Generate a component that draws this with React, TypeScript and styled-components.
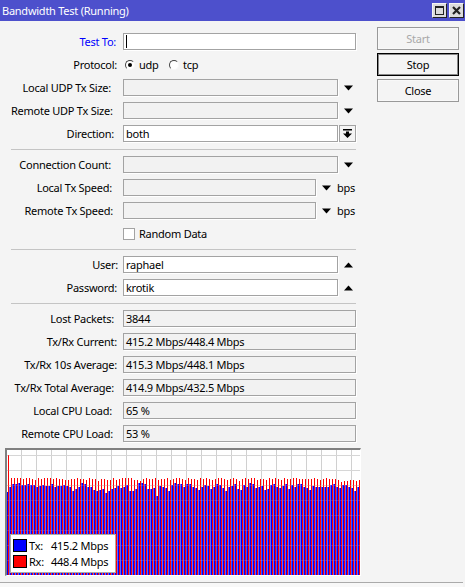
import React from 'react';
import styled, { createGlobalStyle } from 'styled-components';

const GlobalStyle = createGlobalStyle`
    html, body {
        margin: 0;
        padding: 0;
        background: #f4f4f4;
    }
    * {
        box-sizing: border-box;
    }
`;

const Window = styled.div`
    width: 465px;
    height: 587px;
    display: flex;
    flex-direction: column;
    overflow: hidden;
    background: #f4f4f4;
    color: #000;
    font-family: 'Noto Sans', sans-serif;
    font-size: 11px;
    letter-spacing: -0.25px;
`;

const TitleBar = styled.div`
    height: 21px;
    flex: none;
    display: flex;
    align-items: center;
    justify-content: space-between;
    padding: 0 1px 0 2px;
    background: #4d50cc;
    color: #fff;
`;

const TitleButtons = styled.div`
    display: flex;
    gap: 2px;
`;

const TitleButton = styled.div`
    width: 15px;
    height: 15px;
    display: flex;
    align-items: center;
    justify-content: center;
    background: #dcdcdc;
    border: 1px solid;
    border-color: #f4f4f4 #222 #222 #f4f4f4;
`;

const Content = styled.div`
    display: flex;
    align-items: flex-start;
    padding-top: 6px;
`;

const Form = styled.div`
    width: 377px;
    display: flex;
    flex-direction: column;
    gap: 6px;
    padding: 6px 21px 0 11px;
`;

const Row = styled.div`
    height: 17px;
    display: flex;
    align-items: center;
`;

const Label = styled.div<{ $gap: number; $color?: string }>`
    width: 112px;
    flex: none;
    text-align: right;
    white-space: nowrap;
    padding-right: ${(props) => props.$gap}px;
    color: ${(props) => props.$color || '#000'};
`;

const Field = styled.div<{ $editable?: boolean; $width?: number }>`
    height: 17px;
    flex: ${(props) => (props.$width ? 'none' : '1')};
    width: ${(props) => (props.$width ? `${props.$width}px` : 'auto')};
    display: flex;
    align-items: center;
    padding: 0 2px;
    white-space: nowrap;
    background: ${(props) => (props.$editable ? '#fff' : '#f2f2f2')};
    border: 1px solid #a3a3a3;
    box-shadow: 1px 1px 0 #fff;
`;

const Caret = styled.span`
    width: 1px;
    height: 13px;
    background: #000;
`;

const ArrowSlot = styled.div`
    width: 18px;
    height: 17px;
    flex: none;
    display: flex;
    align-items: center;
    justify-content: flex-end;
    padding-right: 3px;
`;

const DirectionButton = styled.div`
    width: 17px;
    height: 17px;
    flex: none;
    margin-left: 1px;
    display: flex;
    align-items: center;
    justify-content: center;
    border: 1px solid #a3a3a3;
    box-shadow: 1px 1px 0 #fff;
`;

const Unit = styled.span`
    margin-left: 3px;
`;

const RadioGroup = styled.div`
    display: flex;
    align-items: center;
    padding-left: 2px;
`;

const Radio = styled.span<{ $checked?: boolean }>`
    width: 10px;
    height: 10px;
    flex: none;
    display: flex;
    align-items: center;
    justify-content: center;
    border-radius: 50%;
    background: #fff;
    border: 1px solid;
    border-color: #444 #f8f8f8 #f8f8f8 #444;

    &::after {
        content: '';
        display: ${(props) => (props.$checked ? 'block' : 'none')};
        width: 4px;
        height: 4px;
        border-radius: 50%;
        background: #000;
    }
`;

const RadioText = styled.span<{ $width: number }>`
    width: ${(props) => props.$width}px;
    padding-left: 4px;
`;

const CheckRow = styled.div`
    height: 17px;
    display: flex;
    align-items: center;
    gap: 4px;
    padding-left: 112px;
`;

const Checkbox = styled.span`
    width: 12px;
    height: 12px;
    background: #fff;
    border: 1px solid #a3a3a3;
`;

const Divider = styled.div`
    height: 1px;
    margin-top: 1px;
    background: #c4c4c4;
`;

const Actions = styled.div`
    display: flex;
    flex-direction: column;
    gap: 3px;
    width: 82px;
`;

const Action = styled.div<{ $state?: 'disabled' | 'focused' }>`
    height: 23px;
    display: flex;
    align-items: center;
    justify-content: center;
    color: ${(props) => (props.$state === 'disabled' ? '#a8a8a8' : '#000')};
    border: 1px solid ${(props) => (props.$state === 'focused' ? '#000' : '#999')};
    box-shadow: inset 0 0 0 1px ${(props) => (props.$state === 'focused' ? '#888' : '#f8f8f8')};
`;

const ChartFrame = styled.div`
    position: relative;
    width: 356px;
    height: 128px;
    margin: 6px 0 0 5px;
    flex: none;
    background: #fff;
    border-style: solid;
    border-width: 2px 1px 1px 2px;
    border-color: #808080 #fff #fff #808080;

    svg {
        display: block;
    }
`;

const Legend = styled.div`
    position: absolute;
    left: 3px;
    bottom: 2px;
    width: 106px;
    height: 39px;
    display: flex;
    flex-direction: column;
    justify-content: center;
    gap: 3px;
    padding-left: 2px;
    background: #fff;
    border: 1px solid #aaa;
`;

const LegendRow = styled.div`
    height: 13px;
    display: flex;
    align-items: center;
`;

const Swatch = styled.span<{ $color: string }>`
    width: 14px;
    height: 13px;
    flex: none;
    background: ${(props) => props.$color};
    border: 1px solid #000;
`;

const LegendName = styled.span`
    width: 24px;
    padding-left: 2px;
`;

const StatusBar = styled.div`
    margin-top: auto;
    height: 5px;
    width: 463px;
    flex: none;
    background: #f8f8f8;
    border-top: 1px solid #aaa;
`;

const Triangle: React.FC<{ up?: boolean }> = ({ up }) => (
    <svg width="9" height="6" viewBox="0 0 9 6">
        <path d={up ? 'M4.5 0.5L9 5.5H0Z' : 'M0 0.5H9L4.5 5.5Z'} fill="#000" />
    </svg>
);

const blueTops = [
    155, 142, 132, 132, 129, 135, 135, 132, 135, 135, 141, 138, 135, 138, 138, 132, 141, 138, 138, 135, 138, 141, 153,
    147, 141, 129, 132, 141, 141, 150, 153, 150, 147, 159, 153, 147, 144, 138, 144, 141, 135, 153, 153, 147, 129, 129,
    132, 147, 147, 144, 168, 138, 141, 144, 153, 135, 129, 132, 132, 141, 132, 132, 141, 144, 150, 141, 135, 138, 147,
    141, 132, 135, 144, 153, 141, 138, 132, 147, 150, 135, 141, 129, 132, 144, 141, 138, 150, 147, 135, 132, 141, 144,
    138, 132, 147, 135, 141, 132, 132, 141, 144, 150, 138, 141, 141, 141, 141, 141, 135, 132, 141, 144, 135, 135, 141,
    144, 153, 141,
];

const redTops = [
    45, 114, 114, 114, 114, 117, 114, 114, 117, 120, 114, 117, 114, 114, 114, 117, 114, 117, 117, 120, 120, 117, 117,
    114, 117, 117, 120, 114, 117, 117, 123, 117, 117, 120, 120, 114, 120, 117, 114, 114, 114, 114, 120, 120, 123, 117,
    114, 117, 117, 114, 120, 117, 117, 114, 120, 117, 114, 114, 117, 120, 114, 117, 117, 120, 114, 117, 114, 117, 120,
    117, 114, 114, 117, 120, 117, 114, 117, 123, 117, 114, 117, 114, 114, 120, 117, 117, 120, 114, 117, 114, 117, 120,
    114, 117, 117, 114, 114, 117, 117, 117, 117, 117, 114, 117, 120, 117, 114, 117, 117, 117, 120, 126, 123, 123, 120,
    120, 123, 120,
];

const toY = (value: number) => Math.round(440 + value / 3);

const BandwidthChart: React.FC = () => {
    const vertical = Array.from({ length: 23 }, (_, i) => 21 + i * 15);
    const horizontal = Array.from({ length: 8 }, (_, i) => 455 + i * 15);
    return (
        <svg width="353" height="125" viewBox="7 450 353 125">
            {vertical.map((x) => (
                <rect key={x} x={x} y={450} width={1} height={125} fill="#d0d0d0" />
            ))}
            {horizontal.map((y) => (
                <rect key={y} x={7} y={y} width={353} height={1} fill="#d0d0d0" />
            ))}
            {blueTops.map((top, i) => (
                <rect key={i} x={6.4 + i * 3} y={toY(top)} width={1.6} height={575 - toY(top)} fill="#0000ff" />
            ))}
            {redTops.map((top, i) => (
                <rect key={i} x={8 + i * 3} y={toY(top)} width={1} height={575 - toY(top)} fill="#ff0000" />
            ))}
            {horizontal.map((y) => (
                <rect key={y} x={7} y={y} width={353} height={1} fill="#fff" opacity={0.14} />
            ))}
        </svg>
    );
};

const App: React.FC = () => {
    return (
        <Window>
            <GlobalStyle />
            <TitleBar>
                <span>Bandwidth Test (Running)</span>
                <TitleButtons>
                    <TitleButton>
                        <svg width="11" height="11" viewBox="0 0 11 11">
                            <path d="M1 1H10V10H1ZM2 3V9H9V3Z" fill="#222" fillRule="evenodd" />
                        </svg>
                    </TitleButton>
                    <TitleButton>
                        <svg width="11" height="11" viewBox="0 0 11 11">
                            <path d="M2 2L9 9M9 2L2 9" stroke="#222" strokeWidth="2.2" />
                        </svg>
                    </TitleButton>
                </TitleButtons>
            </TitleBar>
            <Content>
                <Form>
                    <Row>
                        <Label $gap={7} $color="#0000ff">
                            Test To:
                        </Label>
                        <Field $editable>
                            <Caret />
                        </Field>
                    </Row>
                    <Row>
                        <Label $gap={6}>Protocol:</Label>
                        <RadioGroup>
                            <Radio $checked />
                            <RadioText $width={34}>udp</RadioText>
                            <Radio />
                            <RadioText $width={34}>tcp</RadioText>
                        </RadioGroup>
                    </Row>
                    <Row>
                        <Label $gap={12}>Local UDP Tx Size:</Label>
                        <Field />
                        <ArrowSlot>
                            <Triangle />
                        </ArrowSlot>
                    </Row>
                    <Row>
                        <Label $gap={11}>Remote UDP Tx Size:</Label>
                        <Field />
                        <ArrowSlot>
                            <Triangle />
                        </ArrowSlot>
                    </Row>
                    <Row>
                        <Label $gap={9}>Direction:</Label>
                        <Field $editable>both</Field>
                        <DirectionButton>
                            <svg width="9" height="9" viewBox="0 0 9 9">
                                <path d="M0 0H9V1.5H0ZM3 2.5H6V4.5H9L4.5 9L0 4.5H3Z" fill="#000" />
                            </svg>
                        </DirectionButton>
                    </Row>
                    <Divider />
                    <Row>
                        <Label $gap={12}>Connection Count:</Label>
                        <Field />
                        <ArrowSlot>
                            <Triangle />
                        </ArrowSlot>
                    </Row>
                    <Row>
                        <Label $gap={11}>Local Tx Speed:</Label>
                        <Field $width={193} />
                        <ArrowSlot>
                            <Triangle />
                        </ArrowSlot>
                        <Unit>bps</Unit>
                    </Row>
                    <Row>
                        <Label $gap={10}>Remote Tx Speed:</Label>
                        <Field $width={193} />
                        <ArrowSlot>
                            <Triangle />
                        </ArrowSlot>
                        <Unit>bps</Unit>
                    </Row>
                    <CheckRow>
                        <Checkbox />
                        <span>Random Data</span>
                    </CheckRow>
                    <Divider />
                    <Row>
                        <Label $gap={5}>User:</Label>
                        <Field $editable>raphael</Field>
                        <ArrowSlot>
                            <Triangle up />
                        </ArrowSlot>
                    </Row>
                    <Row>
                        <Label $gap={6}>Password:</Label>
                        <Field $editable>krotik</Field>
                        <ArrowSlot>
                            <Triangle up />
                        </ArrowSlot>
                    </Row>
                    <Divider />
                    <Row>
                        <Label $gap={9}>Lost Packets:</Label>
                        <Field>3844</Field>
                    </Row>
                    <Row>
                        <Label $gap={6}>Tx/Rx Current:</Label>
                        <Field>415.2 Mbps/448.4 Mbps</Field>
                    </Row>
                    <Row>
                        <Label $gap={6}>Tx/Rx 10s Average:</Label>
                        <Field>415.3 Mbps/448.1 Mbps</Field>
                    </Row>
                    <Row>
                        <Label $gap={9}>Tx/Rx Total Average:</Label>
                        <Field>414.9 Mbps/432.5 Mbps</Field>
                    </Row>
                    <Row>
                        <Label $gap={11}>Local CPU Load:</Label>
                        <Field>65 %</Field>
                    </Row>
                    <Row>
                        <Label $gap={10}>Remote CPU Load:</Label>
                        <Field>53 %</Field>
                    </Row>
                </Form>
                <Actions>
                    <Action $state="disabled">Start</Action>
                    <Action $state="focused">Stop</Action>
                    <Action>Close</Action>
                </Actions>
            </Content>
            <ChartFrame>
                <BandwidthChart />
                <Legend>
                    <LegendRow>
                        <Swatch $color="#0000ff" />
                        <LegendName>Tx:</LegendName>
                        <span>415.2 Mbps</span>
                    </LegendRow>
                    <LegendRow>
                        <Swatch $color="#ff0000" />
                        <LegendName>Rx:</LegendName>
                        <span>448.4 Mbps</span>
                    </LegendRow>
                </Legend>
            </ChartFrame>
            <StatusBar />
        </Window>
    );
};

export default App;
